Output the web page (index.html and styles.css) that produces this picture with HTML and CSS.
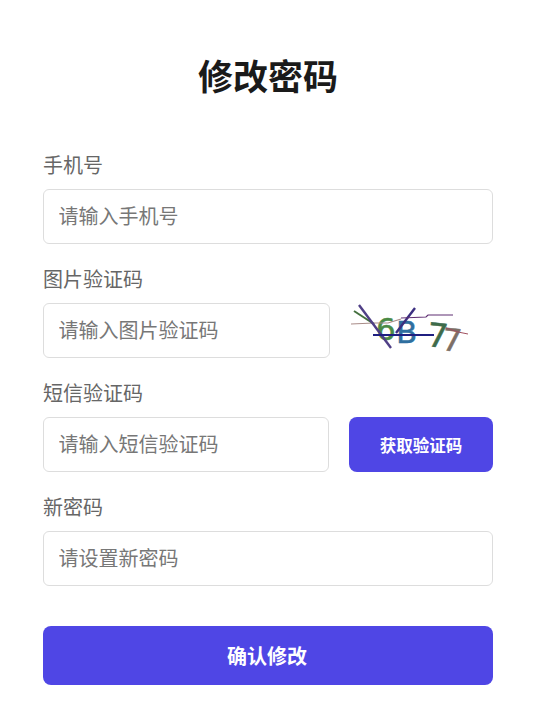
FILE: index.html
```html
<!DOCTYPE html>
<html lang="zh-CN">
<head>
    <meta charset="UTF-8">
    <meta name="viewport" content="width=device-width, initial-scale=1.0">
    <title>修改密码</title>
    <link rel="stylesheet" href="styles.css">
</head>
<body>
    <div class="card">
        <h1 class="title">修改密码</h1>
        <form class="form">
            <div class="field">
                <label class="label">手机号</label>
                <input class="input" type="text" placeholder="请输入手机号">
            </div>
            <div class="field">
                <label class="label">图片验证码</label>
                <div class="row">
                    <input class="input" type="text" placeholder="请输入图片验证码">
                    <svg class="captcha" viewBox="0 0 143 55" width="143" height="55">
                        <text x="26" y="37" font-size="31" fill="#4a8a45" stroke="#4a8a45" stroke-width="0.5" class="captcha-char">6</text>
                        <text x="46" y="40" font-size="31" fill="#2f6f9f" stroke="#2f6f9f" stroke-width="0.5" class="captcha-char">B</text>
                        <text x="76" y="43" font-size="33" fill="#3e6b4a" stroke="#3e6b4a" stroke-width="0.5" class="captcha-char" transform="rotate(6 76 43)">7</text>
                        <text x="91" y="47" font-size="31" fill="#7d6f66" stroke="#7d6f66" stroke-width="0.5" class="captcha-char" transform="rotate(6 91 47)">7</text>
                        <path d="M1 21L24 20H38L51 16" stroke="#a98c88" stroke-width="1.2" fill="none"/>
                        <path d="M4 8L24 21" stroke="#44703f" stroke-width="2"/>
                        <path d="M9 2L41 45" stroke="#4f3f86" stroke-width="2.4"/>
                        <path d="M46 30L65 5" stroke="#3b2f80" stroke-width="2.4"/>
                        <path d="M51 15L76 14L78 12H103" stroke="#5f2f73" stroke-width="1.2" fill="none"/>
                        <path d="M23 32H84" stroke="#1f1f80" stroke-width="2"/>
                        <path d="M96 25L108 29L118 31" stroke="#a0505f" stroke-width="1" fill="none"/>
                    </svg>
                </div>
            </div>
            <div class="field">
                <label class="label">短信验证码</label>
                <div class="row">
                    <input class="input" type="text" placeholder="请输入短信验证码">
                    <button class="btn btn-code" type="button">获取验证码</button>
                </div>
            </div>
            <div class="field">
                <label class="label">新密码</label>
                <input class="input" type="password" placeholder="请设置新密码">
            </div>
            <button class="btn btn-submit" type="button">确认修改</button>
        </form>
    </div>
</body>
</html>
```

FILE: styles.css
```css
* {
    box-sizing: border-box;
}

body {
    margin: 0;
    background-color: #fff;
    font-family: "Inter", "Noto Sans CJK SC", sans-serif;
}

.card {
    padding: 53px 44px 42px 43px;
}

.title {
    margin: 0 0 53px;
    height: 48px;
    line-height: 48px;
    font-size: 35px;
    font-weight: 700;
    text-align: center;
    color: #1a1a1a;
}

.field {
    margin-bottom: 24px;
}

.label {
    display: block;
    margin-bottom: 11px;
    height: 24px;
    line-height: 24px;
    font-size: 20px;
    color: #666;
}

.row {
    display: flex;
    gap: 20px;
}

.input {
    display: block;
    flex: 1;
    min-width: 0;
    width: 100%;
    height: 55px;
    padding: 0 14.5px;
    border: 1px solid #ddd;
    border-radius: 6px;
    outline: none;
    font-family: inherit;
    font-size: 20px;
    color: #333;
}

.input::placeholder {
    color: #777;
}

.captcha {
    flex: none;
    overflow: visible;
}

.captcha-char {
    font-family: "DejaVu Sans", sans-serif;
}

.btn {
    border: none;
    border-radius: 8px;
    background-color: #4f46e5;
    color: #fff;
    font-family: inherit;
    font-weight: 700;
}

.btn-code {
    flex: none;
    width: 144px;
    height: 55px;
    font-size: 16.5px;
}

.btn-submit {
    display: block;
    width: 100%;
    height: 59px;
    margin-top: 40px;
    padding-right: 8px;
    font-size: 20px;
}
```
